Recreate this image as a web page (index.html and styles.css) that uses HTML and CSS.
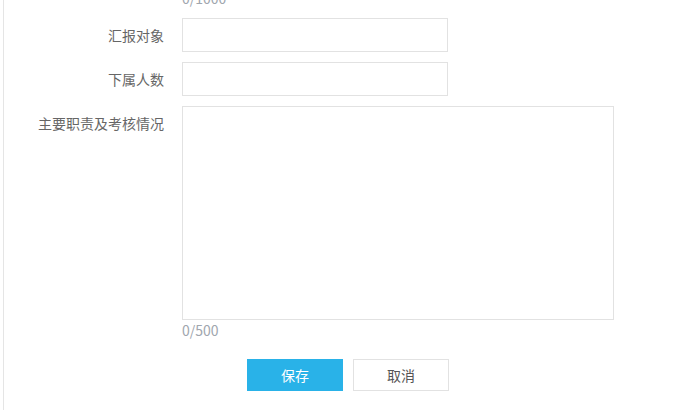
FILE: index.html
```html
<!DOCTYPE html>
<html lang="zh-CN">
<head>
<meta charset="utf-8">
<title>表单</title>
<link rel="stylesheet" href="styles.css">
</head>
<body>
<div class="page">
  <form class="form">
    <div class="row">
      <div class="label"></div>
      <div class="field"><div class="counter">0/1000</div></div>
    </div>
    <div class="row">
      <label class="label">汇报对象</label>
      <div class="field"><input class="input" type="text"></div>
    </div>
    <div class="row">
      <label class="label">下属人数</label>
      <div class="field"><input class="input" type="text"></div>
    </div>
    <div class="row">
      <label class="label">主要职责及考核情况</label>
      <div class="field">
        <textarea class="textarea"></textarea>
        <div class="counter">0/500</div>
      </div>
    </div>
    <div class="row actions-row">
      <div class="label"></div>
      <div class="field actions">
        <button type="button" class="btn btn-primary">保存</button>
        <button type="button" class="btn btn-default">取消</button>
      </div>
    </div>
  </form>
</div>
</body>
</html>
```

FILE: styles.css
```css
html, body {
  margin: 0;
  padding: 0;
  height: 100%;
  overflow: hidden;
  background: #fff;
}
body {
  font-family: "Noto Sans CJK SC", "Noto Sans", sans-serif;
  font-size: 14px;
  color: #555;
}
.page {
  display: flow-root;
  margin-left: 3px;
  border-left: 1px solid #e5e5e5;
  height: 100%;
  box-sizing: border-box;
}
.form {
  display: flex;
  flex-direction: column;
  gap: 10px;
  margin-top: -12px;
}
.row {
  display: grid;
  grid-template-columns: 160px 1fr;
  column-gap: 18px;
  align-items: start;
}
.label {
  text-align: right;
  line-height: 34px;
  color: #666;
  font-size: 14px;
  white-space: nowrap;
}
.field {
  display: flex;
  flex-direction: column;
  align-items: flex-start;
}
.counter {
  line-height: 20px;
  height: 20px;
  color: #a0a6ae;
  font-size: 14px;
}
.input {
  width: 266px;
  height: 34px;
  box-sizing: border-box;
  border: 1px solid #e2e2e2;
  margin: 0;
  padding: 0 8px;
  outline: none;
  font: inherit;
}
.textarea {
  width: 432px;
  height: 214px;
  box-sizing: border-box;
  border: 1px solid #e2e2e2;
  margin: 0;
  padding: 6px 8px;
  resize: none;
  outline: none;
  font: inherit;
  display: block;
}
.actions-row {
  margin-top: 9px;
}
.actions {
  flex-direction: row;
  gap: 10px;
  padding-left: 65px;
}
.btn {
  width: 96px;
  height: 32px;
  box-sizing: border-box;
  font-family: "Noto Sans CJK SC", sans-serif;
  font-size: 14px;
  cursor: pointer;
  margin: 0;
  padding: 0;
}
.btn-primary {
  background: #29b2e8;
  border: 1px solid #29b2e8;
  color: #fff;
}
.btn-default {
  background: #fff;
  border: 1px solid #e2e2e2;
  color: #555;
}
```
